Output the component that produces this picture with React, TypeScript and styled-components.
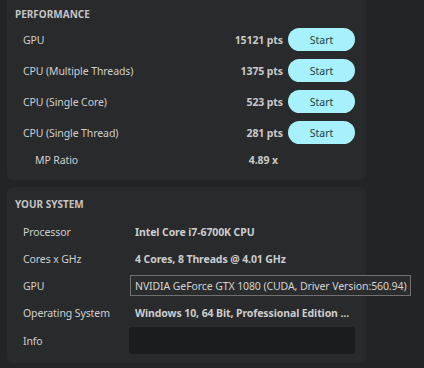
import styled, { createGlobalStyle } from "styled-components";

const GlobalStyle = createGlobalStyle`
  html, body {
    margin: 0;
    padding: 0;
    background: #222426;
    font-family: "Noto Sans", "Open Sans", sans-serif;
    color: #d2d2d2;
  }
`;

const perf = [
  { label: "GPU", value: "15121 pts" },
  { label: "CPU (Multiple Threads)", value: "1375 pts" },
  { label: "CPU (Single Core)", value: "523 pts" },
  { label: "CPU (Single Thread)", value: "281 pts" },
];

export default function App() {
  return (
    <>
      <GlobalStyle />
      <Page>
        <Panel $top>
          <Title>Performance</Title>
          {perf.map((p) => (
            <PerfRow key={p.label}>
              <Label>{p.label}</Label>
              <Score>{p.value}</Score>
              <StartButton>Start</StartButton>
            </PerfRow>
          ))}
          <RatioRow>
            <Label $indent>MP Ratio</Label>
            <Score>4.89 x</Score>
          </RatioRow>
        </Panel>
        <Panel>
          <Title $gap={7}>Your System</Title>
          <SysRow>
            <Label>Processor</Label>
            <Value>Intel Core i7-6700K CPU</Value>
          </SysRow>
          <SysRow>
            <Label>Cores x GHz</Label>
            <Value>4 Cores, 8 Threads @ 4.01 GHz</Value>
          </SysRow>
          <SysRow>
            <Label>GPU</Label>
            <Tooltip>NVIDIA GeForce GTX 1080 (CUDA, Driver Version:560.94)</Tooltip>
          </SysRow>
          <SysRow>
            <Label>Operating System</Label>
            <Value>Windows 10, 64 Bit, Professional Edition ...</Value>
          </SysRow>
          <InfoRow>
            <Label>Info</Label>
            <InfoBox />
          </InfoRow>
        </Panel>
      </Page>
    </>
  );
}

const Page = styled.div`
  width: 424px;
  height: 368px;
  overflow: hidden;
  padding-left: 7px;
  box-sizing: border-box;
  display: flex;
  flex-direction: column;
  gap: 7px;
`;

const Panel = styled.section<{ $top?: boolean }>`
  width: 359px;
  box-sizing: border-box;
  background: #282a2c;
  border-radius: 6px;
  margin-top: ${(p) => (p.$top ? "-6px" : "0")};
  padding: ${(p) => (p.$top ? "13px 11px 8px 8px" : "10px 11px 8px 8px")};
`;

const Title = styled.h2<{ $gap?: number }>`
  margin: 0 0 ${(p) => p.$gap ?? 3}px 0;
  font-size: 10px;
  font-weight: 700;
  text-transform: uppercase;
  color: #c4c4c4;
  line-height: 14px;
  height: 14px;
`;

const PerfRow = styled.div`
  display: flex;
  align-items: center;
  height: 31px;
`;

const RatioRow = styled(PerfRow)`
  height: 24px;
  padding-right: 72px;
`;

const Label = styled.div<{ $indent?: boolean }>`
  flex: none;
  width: 112px;
  padding-left: ${(p) => (p.$indent ? "20px" : "8px")};
  font-size: 10.5px;
  letter-spacing: -0.1px;
  color: #cfcfcf;
  white-space: nowrap;
`;

const Score = styled.div`
  flex: 1;
  text-align: right;
  font-size: 10.5px;
  letter-spacing: -0.1px;
  font-weight: 700;
  color: #c9c9c9;
  padding-right: 5px;
`;

const StartButton = styled.button`
  width: 67px;
  height: 23px;
  border: none;
  border-radius: 12px;
  background: #a6f1fb;
  color: #1d4247;
  font-family: inherit;
  font-size: 10.5px;
  padding: 0;
`;

const SysRow = styled.div`
  position: relative;
  display: flex;
  align-items: center;
  height: 27px;
`;

const InfoRow = styled(SysRow)`
  height: 29px;
`;

const Value = styled.div`
  font-size: 10.5px;
  letter-spacing: -0.1px;
  font-weight: 700;
  color: #cdcdcd;
  white-space: nowrap;
`;

const Tooltip = styled.div`
  position: absolute;
  left: 115px;
  top: 3px;
  height: 21px;
  box-sizing: border-box;
  padding: 0 4px;
  display: flex;
  align-items: center;
  background: #2b2c2d;
  border: 1px solid #707070;
  font-size: 10.5px;
  letter-spacing: -0.1px;
  color: #d4d4d4;
  white-space: nowrap;
`;

const InfoBox = styled.div`
  flex: 1;
  height: 27px;
  background: #1b1c1d;
  border-radius: 3px;
  margin-left: -6px;
`;
